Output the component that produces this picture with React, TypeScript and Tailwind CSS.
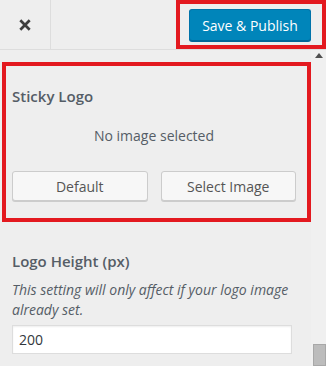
import React from "react";

export default function App() {
  const font = { fontFamily: '"Open Sans", "Noto Sans", sans-serif' };
  return (
    <div
      className="relative w-[326px] h-[366px] overflow-hidden bg-[#eeeeee] text-[#555d66]"
      style={font}
    >
      {/* Header */}
      <div className="flex h-[50px] border-b border-[#dddddd]">
        <div className="flex w-[51px] items-center justify-center border-r border-[#dddddd]">
          <svg width="12" height="12" viewBox="0 0 12 12">
            <path d="M1.3 1.3 L10.7 10.7 M10.7 1.3 L1.3 10.7" stroke="#3c3c3c" strokeWidth="2.7" strokeLinecap="butt" />
          </svg>
        </div>
        <div className="flex flex-1 items-start justify-end pt-[9px] pr-[15px]">
          <button className="h-[32px] w-[122px] rounded-[3px] border border-[#0073aa] border-b-[#006799] bg-[#0085ba] text-[14px] text-white shadow-[0_1px_0_#006799]">
            Save &amp; Publish
          </button>
        </div>
      </div>

      {/* Body */}
      <div className="flex h-[316px]">
        <div className="flex w-[311px] flex-col pl-[12px] pr-[15px] pt-[36px]">
          <div className="text-[15px] font-semibold leading-[20px] text-[#555d66]">Sticky Logo</div>
          <div className="mt-[20px] w-[284px] text-center text-[14px] leading-[20px] text-[#555d66]">
            No image selected
          </div>
          <div className="mt-[25px] flex w-[284px] gap-[13px]">
            <button className="h-[30px] w-[136px] rounded-[3px] border border-[#cccccc] bg-[#f7f7f7] text-[14px] text-[#555555] shadow-[0_1px_0_#cccccc]">
              Default
            </button>
            <button className="h-[30px] w-[136px] rounded-[3px] border border-[#cccccc] bg-[#f7f7f7] text-[14px] text-[#555555] shadow-[0_1px_0_#cccccc]">
              Select Image
            </button>
          </div>
          <div className="mt-[50px] text-[15px] font-semibold leading-[20px] text-[#555d66]">Logo Height (px)</div>
          <div className="mt-[9px] w-[284px] text-[14px] italic leading-[20px] text-[#555d66]">
            This setting will only affect if your logo image already set.
          </div>
          <input
            readOnly
            value="200"
            className="mt-[5px] h-[29px] w-[280px] border border-[#dddddd] bg-white px-[6px] text-[14px] text-[#32373c] shadow-[inset_0_1px_2px_rgba(0,0,0,0.07)] outline-none"
            style={font}
          />
        </div>
        {/* Scrollbar */}
        <div className="relative flex w-[15px] flex-col items-center bg-[#f0f0f0]">
          <svg className="mt-[3px]" width="8" height="5" viewBox="0 0 8 5">
            <path d="M0 5 L4 0 L8 5 Z" fill="#505050" />
          </svg>
          <div className="mt-auto ml-[1px] h-[22px] w-[13px] border border-[#a8a8a8] bg-[#bcbcbc]" />
        </div>
      </div>

      {/* Red annotation boxes */}
      <div className="pointer-events-none absolute left-[176px] top-0 h-[49px] w-[150px] border-4 border-[#e3191f]" />
      <div className="pointer-events-none absolute left-[2px] top-[62px] h-[160px] w-[309px] border-4 border-[#e3191f]" />
    </div>
  );
}
